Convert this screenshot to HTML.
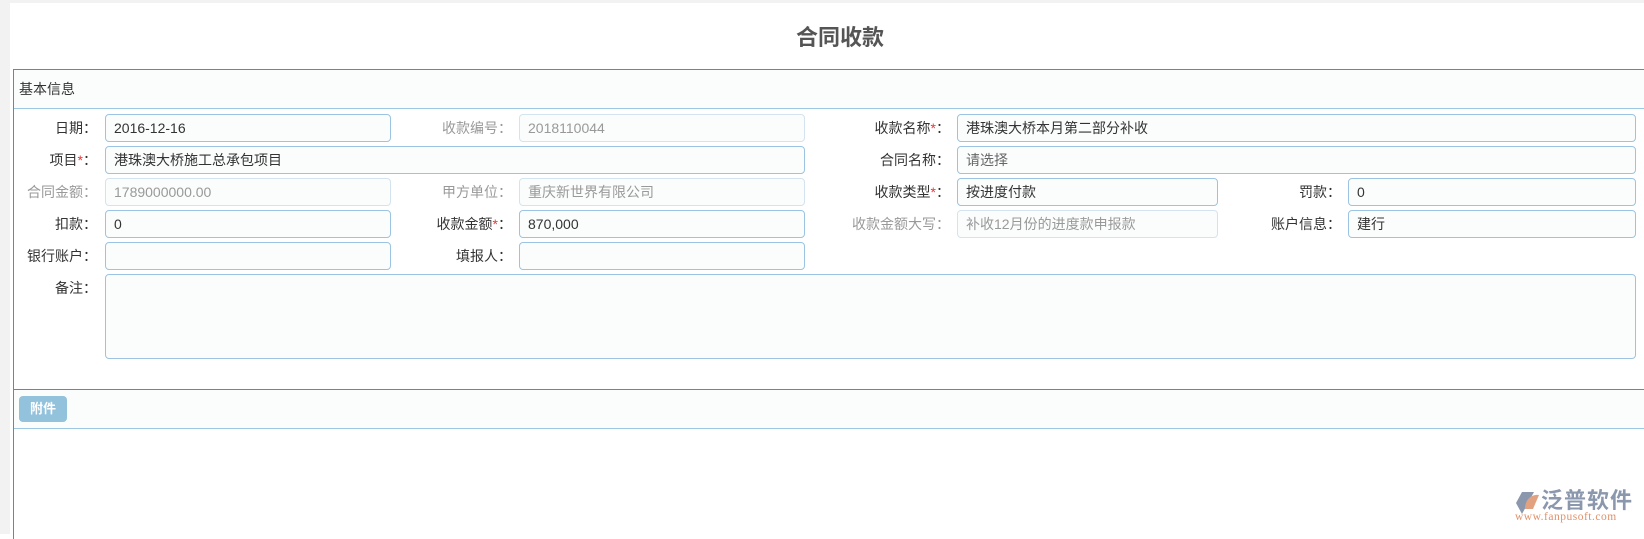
<!DOCTYPE html>
<html><head><meta charset="utf-8"><style>
*{box-sizing:border-box;margin:0;padding:0}
html{background:#fff}
body{width:1644px;height:534px;background:#fff;font-family:"Liberation Sans","Noto Sans CJK SC",sans-serif;font-size:14px;color:#333;position:relative;overflow:hidden}
#lstrip{position:absolute;left:0;top:0;width:10px;height:534px;background:#f2f2f2}
#tstrip{position:absolute;left:0;top:0;width:1644px;height:3px;background:#f2f2f2}
.t{position:absolute;left:0;width:1644px;top:24px;text-align:center;font-size:22px;font-weight:bold;color:#555;line-height:28px;padding-left:36px}
.panel{position:absolute;left:13px;top:69px;width:1631px;height:470px;border-left:1px solid #3c96c8;border-top:1px solid #3c96c8;background:#fff}
.hd{position:absolute;left:0;top:0;width:100%;height:39px;background:#fbfdfd;border-bottom:1px solid #9cc8e4}
.hd span{position:absolute;left:5px;top:9px;font-size:14px;color:#333}
.lab{position:absolute;text-align:right;line-height:28px;white-space:nowrap}
.g{color:#999}
.r{color:#e33}
.in{position:absolute;height:28px;border:1px solid #9cc4e2;border-radius:4px;background:#fbfdfd;line-height:26px;padding-left:8px;white-space:nowrap}
.in.d{border-color:#d3e4f0;color:#999}
.bar{position:absolute;left:0;top:319px;width:100%;height:40px;background:#fbfdfd;border-top:1px solid #3c96c8;border-bottom:1px solid #9cc8e4}
.btn{position:absolute;left:5px;top:6px;width:48px;height:26px;background:#93c2dc;border-radius:4px;color:#fff;font-weight:bold;font-size:13px;text-align:center;line-height:26px}
</style></head><body>
<div id="lstrip"></div><div id="tstrip"></div>
<div class="t">合同收款</div>
<div class="panel">
<div class="hd"><span>基本信息</span></div>
<div class="bar"><div class="btn">附件</div></div>
</div>
<div class="lab" style="left:0;width:97px;top:114px">日期：</div>
<div class="in" style="left:105px;width:286px;top:114px">2016-12-16</div>
<div class="lab g" style="left:400px;width:112px;top:114px">收款编号：</div>
<div class="in d" style="left:519px;width:286px;top:114px">2018110044</div>
<div class="lab" style="left:830px;width:120px;top:114px">收款名称<span class="r">*</span>：</div>
<div class="in" style="left:957px;width:679px;top:114px">港珠澳大桥本月第二部分补收</div>
<div class="lab" style="left:0;width:97px;top:146px">项目<span class="r">*</span>：</div>
<div class="in" style="left:105px;width:700px;top:146px">港珠澳大桥施工总承包项目</div>
<div class="lab" style="left:830px;width:120px;top:146px">合同名称：</div>
<div class="in" style="left:957px;width:679px;top:146px;color:#666">请选择</div>
<div class="lab g" style="left:0;width:97px;top:178px">合同金额：</div>
<div class="in d" style="left:105px;width:286px;top:178px">1789000000.00</div>
<div class="lab g" style="left:400px;width:112px;top:178px">甲方单位：</div>
<div class="in d" style="left:519px;width:286px;top:178px">重庆新世界有限公司</div>
<div class="lab" style="left:830px;width:120px;top:178px">收款类型<span class="r">*</span>：</div>
<div class="in" style="left:957px;width:261px;top:178px">按进度付款</div>
<div class="lab" style="left:1240px;width:101px;top:178px">罚款：</div>
<div class="in" style="left:1348px;width:288px;top:178px">0</div>
<div class="lab" style="left:0;width:97px;top:210px">扣款：</div>
<div class="in" style="left:105px;width:286px;top:210px">0</div>
<div class="lab" style="left:400px;width:112px;top:210px">收款金额<span class="r">*</span>：</div>
<div class="in" style="left:519px;width:286px;top:210px">870,000</div>
<div class="lab g" style="left:830px;width:120px;top:210px">收款金额大写：</div>
<div class="in d" style="left:957px;width:261px;top:210px">补收12月份的进度款申报款</div>
<div class="lab" style="left:1240px;width:101px;top:210px">账户信息：</div>
<div class="in" style="left:1348px;width:288px;top:210px">建行</div>
<div class="lab" style="left:0;width:97px;top:242px">银行账户：</div>
<div class="in" style="left:105px;width:286px;top:242px"></div>
<div class="lab" style="left:400px;width:112px;top:242px">填报人：</div>
<div class="in" style="left:519px;width:286px;top:242px"></div>
<div class="lab" style="left:0;width:97px;top:274px">备注：</div>
<div class="in" style="left:105px;width:1531px;top:274px;height:85px"></div>
<svg style="position:absolute;left:1514px;top:489px" width="28" height="28" viewBox="0 0 28 28">
<polygon points="2,14 8,3 20,3 14,14 8,25 2,14" fill="#8a97ad"/>
<path d="M11,20 C11,10 18,5 25,6 L19,20 Z" fill="#e3a27f"/>
</svg>
<div style="position:absolute;left:1541px;top:488px;font-size:22px;color:#8a97ad;font-weight:bold;letter-spacing:1px;line-height:26px;white-space:nowrap">泛普软件</div>
<div style="position:absolute;left:1515px;top:511px;font-family:'Liberation Serif',serif;font-size:11.5px;color:#e0916a;letter-spacing:0.5px;line-height:13px;white-space:nowrap">www.fanpusoft.com</div>
</body></html>
